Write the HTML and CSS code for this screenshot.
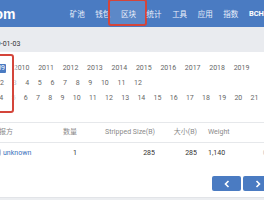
FILE: index.html
```html
<!DOCTYPE html>
<html lang="zh-CN">
<head>
<meta charset="utf-8">
<title>BTC.com 区块</title>
<link rel="stylesheet" href="styles.css">
</head>
<body>
<div class="page">
  <header class="topbar">
    <div class="logo">BTC.com</div>
    <nav class="nav">
      <a class="nav-item">矿池</a>
      <a class="nav-item">钱包</a>
      <a class="nav-item is-active">区块</a>
      <a class="nav-item">统计</a>
      <a class="nav-item">工具</a>
      <a class="nav-item">应用</a>
      <a class="nav-item">指数</a>
      <a class="nav-item nav-item--latin">BCH</a>
    </nav>
  </header>

  <div class="crumb"><span class="crumb-date">2019-01-03</span></div>

  <section class="cal">
    <div class="cal-row cal-row--years">
      <span class="cal-item is-selected">2009</span>
      <span class="cal-item">2010</span>
      <span class="cal-item">2011</span>
      <span class="cal-item">2012</span>
      <span class="cal-item">2013</span>
      <span class="cal-item">2014</span>
      <span class="cal-item">2015</span>
      <span class="cal-item">2016</span>
      <span class="cal-item">2017</span>
      <span class="cal-item">2018</span>
      <span class="cal-item">2019</span>
    </div>
    <div class="cal-row cal-row--months">
      <span class="cal-item">1</span>
      <span class="cal-item">2</span>
      <span class="cal-item">3</span>
      <span class="cal-item">4</span>
      <span class="cal-item">5</span>
      <span class="cal-item">6</span>
      <span class="cal-item">7</span>
      <span class="cal-item">8</span>
      <span class="cal-item">9</span>
      <span class="cal-item">10</span>
      <span class="cal-item">11</span>
      <span class="cal-item">12</span>
    </div>
    <div class="cal-row cal-row--days">
      <span class="cal-item">1</span>
      <span class="cal-item">2</span>
      <span class="cal-item">3</span>
      <span class="cal-item">4</span>
      <span class="cal-item">5</span>
      <span class="cal-item">6</span>
      <span class="cal-item">7</span>
      <span class="cal-item">8</span>
      <span class="cal-item">9</span>
      <span class="cal-item">10</span>
      <span class="cal-item">11</span>
      <span class="cal-item">12</span>
      <span class="cal-item">13</span>
      <span class="cal-item">14</span>
      <span class="cal-item">15</span>
      <span class="cal-item">16</span>
      <span class="cal-item">17</span>
      <span class="cal-item">18</span>
      <span class="cal-item">19</span>
      <span class="cal-item">20</span>
      <span class="cal-item">21</span>
    </div>
    <div class="cal-mark"></div>
  </section>

  <div class="grid">
    <div class="grid-row grid-row--head">
      <div class="cell">播报方</div>
      <div class="cell cell--right">数量</div>
      <div class="cell cell--right">Stripped Size(B)</div>
      <div class="cell cell--right">大小(B)</div>
      <div class="cell cell--left-pad">Weight</div>
      <div class="cell cell--offscreen">奖励</div>
    </div>
    <div class="grid-row">
      <div class="cell cell--pool">
        <svg class="pool-icon" width="9" height="9" viewBox="0 0 9 9"><rect x="1" y="1" width="7" height="7" rx="2" fill="none" stroke="#7e9fcf" stroke-width="1.2"/></svg>
        <a class="link">unknown</a>
      </div>
      <div class="cell cell--right cell--dark">1</div>
      <div class="cell cell--right cell--dark">285</div>
      <div class="cell cell--right cell--dark">285</div>
      <div class="cell cell--left-pad cell--dark">1,140</div>
      <div class="cell cell--dark cell--faint">0.00</div>
    </div>
  </div>

  <div class="pager">
    <a class="pager-btn"><svg width="6" height="8" viewBox="0 0 6 8"><polyline points="4.5,1 1.5,4 4.5,7" fill="none" stroke="#fff" stroke-width="1.6"/></svg></a>
    <a class="pager-btn"><svg width="6" height="8" viewBox="0 0 6 8"><polyline points="1.5,1 4.5,4 1.5,7" fill="none" stroke="#fff" stroke-width="1.6"/></svg></a>
  </div>

  <div class="footer"></div>
</div>
</body>
</html>
```

FILE: styles.css
```css
html, body {
  margin: 0;
  padding: 0;
  overflow: hidden;
  background: #fff;
}
body {
  width: 264px;
  font-family: Roboto, "Noto Sans CJK SC", sans-serif;
  font-size: 7px;
  color: #555;
}
.page {
  width: 264px;
  overflow: hidden;
}

/* top bar */
.topbar {
  display: flex;
  align-items: center;
  height: 27px;
  background: #4a7bc2;
}
.logo {
  flex: none;
  margin-left: -46px;
  color: #fff;
  font-family: "Liberation Sans", Arial, sans-serif;
  font-weight: bold;
  font-size: 14px;
  line-height: 14px;
  padding-top: 1px;
}
.nav {
  display: flex;
  align-self: stretch;
  margin-left: 49px;
  flex: none;
}
.nav-item {
  position: relative;
  display: flex;
  align-items: center;
  padding: 0 5.3px;
  font-family: "Noto Sans CJK SC", sans-serif;
  font-size: 7.5px;
  color: #e9effa;
  white-space: nowrap;
  padding-bottom: 1px;
}
.nav-item--latin {
  font-family: Roboto, sans-serif;
  font-weight: bold;
  font-size: 7.5px;
  color: #fff;
}
.nav-item.is-active::after {
  content: "";
  position: absolute;
  left: -8px;
  right: -6px;
  top: -1px;
  bottom: 1px;
  border: 2px solid #d4453a;
  border-radius: 3px;
  background: rgba(255, 255, 255, 0.1);
}

/* breadcrumb band */
.crumb {
  height: 25px;
  background: #e9ebef;
  display: flex;
  align-items: flex-end;
}
.crumb-date {
  margin-left: -15px;
  margin-bottom: 3px;
  line-height: 10px;
  color: #333;
  font-size: 7px;
}

/* calendar */
.cal {
  position: relative;
  padding: 9px 0 16px;
}
.cal-row {
  display: flex;
  align-items: center;
  height: 15px;
  gap: 6.7px;
  white-space: nowrap;
}
.cal-row--years { margin-left: -11.7px; }
.cal-row--months { margin-left: -13.7px; }
.cal-row--days { margin-left: -38.4px; gap: 6.3px; }
.cal-item {
  flex: none;
  padding: 0 1px;
  line-height: 9px;
  color: #666;
}
.cal-item.is-selected {
  background: #4a7bc2;
  color: #fff;
  border-radius: 1px;
}
.cal-mark {
  position: absolute;
  left: -16px;
  top: 2px;
  width: 30px;
  height: 59px;
  box-sizing: border-box;
  border: 2px solid #d4453a;
  border-radius: 3px;
  box-shadow: 0 0 2px 2px rgba(255, 255, 255, 0.75);
}

/* table */
.grid {
  margin-left: -8px;
}
.grid-row {
  display: grid;
  grid-template-columns: 60px 25px 78px 42px 65px 60px;
  height: 20px;
  box-sizing: border-box;
  border-top: 1px solid #e6e8eb;
  align-items: center;
  white-space: nowrap;
}
.grid-row--head .cell {
  color: #8a8a8a;
}
.grid-row--head {
  padding-bottom: 2px;
}
.cell {
  line-height: 10px;
  overflow: hidden;
}
.cell--right { text-align: right; }
.cell--left-pad { padding-left: 11px; }
.cell--offscreen { padding-left: 12px; }
.cell--dark { color: #333; }
.cell--faint { color: #bbb; padding-left: 1px; }
.cell--pool {
  display: flex;
  align-items: center;
  gap: 2px;
}
.pool-icon { flex: none; }
.link { color: #3a72bd; }

/* pager */
.pager {
  display: flex;
  justify-content: flex-end;
  gap: 2px;
  margin-top: 14px;
  margin-right: -8px;
}
.pager-btn {
  display: flex;
  align-items: center;
  justify-content: center;
  width: 29px;
  height: 15px;
  background: #4a7bc2;
  border-radius: 2px;
}

.footer {
  margin-top: 6px;
  height: 10px;
  background: #eceef1;
  border-top: 1px solid #e2e4e8;
}
```
